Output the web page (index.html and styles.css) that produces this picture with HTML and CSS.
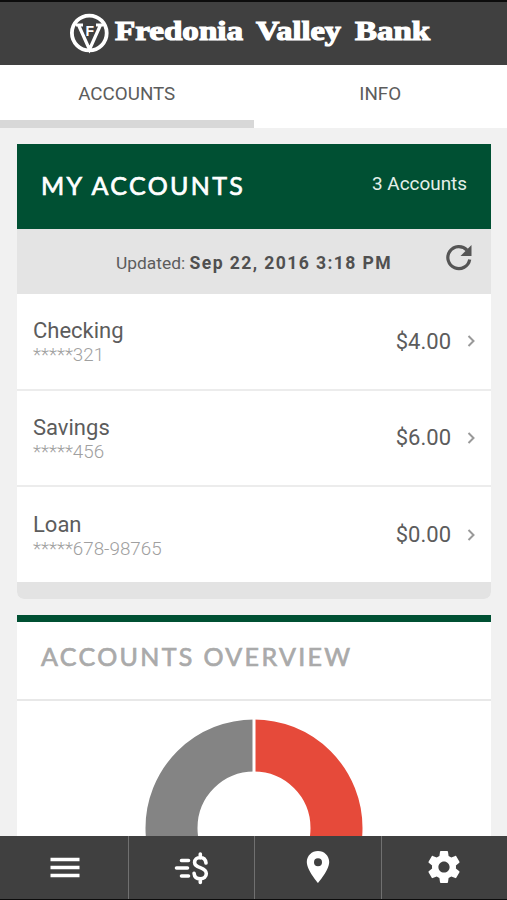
FILE: index.html
```
<!DOCTYPE html>
<html lang="en">

<head>
  <meta charset="UTF-8">
  <meta name="viewport" content="width=device-width, initial-scale=1.0">
  <title>Fredonia Valley Bank</title>
  <link rel="stylesheet" href="styles.css">
</head>

<body>
  <header class="header">
    <svg class="logo" viewBox="0 0 370 50" width="370" height="50">
      <circle cx="20.3" cy="25" r="17.4" fill="none" stroke="#fff" stroke-width="3.8" />
      <path d="M7 17h7M27 17h7M9.500 17l11 24.500 11-24.500" fill="none" stroke="#fff" stroke-width="3.2" />
      <text class="logo-letter" x="16.5" y="28">F</text>
      <text class="logo-text" x="46" y="32" textLength="128" lengthAdjust="spacingAndGlyphs">Fredonia</text>
      <text class="logo-text" x="187" y="32" textLength="85" lengthAdjust="spacingAndGlyphs">Valley</text>
      <text class="logo-text" x="286" y="32" textLength="75" lengthAdjust="spacingAndGlyphs">Bank</text>
    </svg>
  </header>

  <div class="tabs">
    <div class="tab active">ACCOUNTS</div>
    <div class="tab">INFO</div>
  </div>

  <main class="container">
    <section class="card">
      <div class="card-header">
        <h2 class="card-title">MY ACCOUNTS</h2>
        <span class="count">3 Accounts</span>
      </div>
      <div class="updated">
        <span class="updated-text">Updated: <b>Sep 22, 2016 3:18 PM</b></span>
        <svg class="refresh" viewBox="0 0 28 28" width="28" height="28">
          <path d="M24.700 16.500A11 11 0 1 1 22 7.200" fill="none" stroke="#555" stroke-width="3.2" />
          <path d="M26.500 2v11H15.500z" fill="#555" />
        </svg>
      </div>
      <div class="account">
        <div class="account-info">
          <div class="name">Checking</div>
          <div class="number">*****321</div>
        </div>
        <div class="amount">$4.00</div>
        <svg class="arrow" viewBox="0 0 8 12" width="8" height="12"><path d="M1.500 1l5 5-5 5" /></svg>
      </div>
      <div class="account">
        <div class="account-info">
          <div class="name">Savings</div>
          <div class="number">*****456</div>
        </div>
        <div class="amount">$6.00</div>
        <svg class="arrow" viewBox="0 0 8 12" width="8" height="12"><path d="M1.500 1l5 5-5 5" /></svg>
      </div>
      <div class="account">
        <div class="account-info">
          <div class="name">Loan</div>
          <div class="number">*****678-98765</div>
        </div>
        <div class="amount">$0.00</div>
        <svg class="arrow" viewBox="0 0 8 12" width="8" height="12"><path d="M1.500 1l5 5-5 5" /></svg>
      </div>
      <div class="card-footer"></div>
    </section>

    <section class="card overview">
      <div class="overview-header">
        <h2 class="card-title">ACCOUNTS OVERVIEW</h2>
      </div>
      <svg class="chart" viewBox="0 0 218 218" width="218" height="218">
        <path d="M109 26.500a82.500 82.500 0 0 1 0 165" fill="none" stroke="#e64a3a" stroke-width="52" />
        <path d="M109 191.500a82.500 82.500 0 0 1 0-165" fill="none" stroke="#848484" stroke-width="52" />
        <path d="M109 0v218" stroke="#fff" stroke-width="3" />
      </svg>
    </section>
  </main>

  <nav class="bottom-nav">
    <div class="nav-item">
      <svg viewBox="0 0 36 36" width="36" height="36">
        <path d="M3.500 9.500h29M3.500 17.500h29M3.500 25.500h29" stroke="#fff" stroke-width="3.400" />
      </svg>
    </div>
    <div class="nav-item">
      <svg viewBox="0 0 36 36" width="36" height="36">
        <path d="M8.500 10.500h7M3.500 18h11M8.500 26h7" fill="none" stroke="#fff" stroke-width="3.600" stroke-linecap="round" />
        <path d="M33 13c-.4-3.500-2.500-5.500-5.800-5.500s-5.600 1.900-5.600 4.900c0 6.300 11.700 4.300 11.700 11.200 0 3.300-2.500 5.200-5.900 5.200-3.600 0-6-2-6.300-5.500M27.300 4V8M27.300 29V32.500" fill="none" stroke="#fff" stroke-width="3.600" stroke-linecap="round" />
      </svg>
    </div>
    <div class="nav-item">
      <svg viewBox="0 0 36 36" width="36" height="36">
        <path d="M18 1C11.700 1 6.800 5.900 6.800 12c0 8.200 11.200 21 11.200 21s11.200-12.800 11.200-21C29.200 5.900 24.300 1 18 1zm0 15.200a4 4 0 1 1 0-8 4 4 0 0 1 0 8z" fill="#fff" />
      </svg>
    </div>
    <div class="nav-item">
      <svg class="gear" viewBox="2 2 20 20" width="32" height="32">
        <path d="M19.430 12.980c.040-.320.070-.640.070-.980s-.030-.660-.070-.980l2.110-1.650c.190-.150.240-.420.120-.640l-2-3.460c-.120-.220-.390-.300-.610-.220l-2.490 1c-.520-.400-1.080-.730-1.690-.980l-.380-2.650C14.460 2.180 14.250 2 14 2h-4c-.250 0-.460.180-.490.420l-.380 2.650c-.610.250-1.170.590-1.690.980l-2.490-1c-.230-.090-.490 0-.610.220l-2 3.460c-.130.220-.070.490.120.640l2.110 1.650c-.040.320-.070.650-.070.980s.030.660.070.980l-2.110 1.650c-.190.150-.240.420-.120.640l2 3.460c.120.220.390.300.610.220l2.490-1c.520.400 1.080.730 1.690.980l.380 2.650c.030.240.240.420.490.420h4c.250 0 .460-.180.490-.420l.380-2.650c.610-.250 1.170-.590 1.690-.980l2.490 1c.230.090.490 0 .610-.220l2-3.460c.120-.220.070-.490-.120-.640l-2.110-1.650zM12 15.500c-1.930 0-3.500-1.570-3.500-3.500s1.570-3.500 3.500-3.500 3.500 1.570 3.500 3.500-1.570 3.500-3.500 3.500z" fill="#fff" />
      </svg>
    </div>
  </nav>
</body>

</html>
```

FILE: styles.css
```
* {
  box-sizing: border-box;
}

body {
  display: flex;
  flex-direction: column;
  height: 100vh;
  margin: 0;
  overflow: hidden;
  background-color: #f1f1f1;
  color: #5c5c5c;
  font-family: Roboto, sans-serif;
}

.header {
  flex: none;
  height: 65px;
  padding: 6px 0 0 69px;
  background-color: #404040;
  border-top: 2px solid #0c0c0c;
}

.logo {
  display: block;
}

.logo-text {
  font-family: "Liberation Serif", serif;
  font-size: 27px;
  font-weight: bold;
  fill: #fff;
  stroke: #fff;
  stroke-width: 1.2px;
}

.logo-letter {
  font-family: "Liberation Sans", sans-serif;
  font-size: 14px;
  font-weight: bold;
  fill: #fff;
}

.tabs {
  display: flex;
  flex: none;
  height: 63px;
  background-color: #fff;
}

.tab {
  flex: 1;
  border-bottom: 8px solid transparent;
  font-size: 18.8px;
  line-height: 58px;
  text-align: center;
}

.tab.active {
  border-color: #d8d8d8;
}

.container {
  flex: 1;
  min-height: 0;
  padding: 16px 16px 0 17px;
  overflow: hidden;
}

.card {
  margin-bottom: 16px;
  background-color: #fff;
  border-radius: 0 0 7px 7px;
  overflow: hidden;
}

.card-header {
  display: flex;
  align-items: center;
  justify-content: space-between;
  height: 85px;
  padding: 0 24px;
  background-color: #005033;
  color: #fff;
}

.card-title {
  margin: 0;
  padding-bottom: 3px;
  font-family: Lato, sans-serif;
  font-size: 25px;
  font-weight: normal;
  letter-spacing: 2.35px;
  -webkit-text-stroke: 0.7px currentColor;
}

.count {
  padding-bottom: 6px;
  font-size: 18.9px;
  color: #e4f0ea;
}

.updated {
  display: flex;
  align-items: center;
  height: 65px;
  padding: 0 18px 0 99px;
  background-color: #e4e4e4;
  font-size: 17.4px;
}

.updated-text {
  flex: 1;
  padding-top: 2px;
  white-space: nowrap;
}

.updated b {
  color: #505050;
  font-size: 17.6px;
  letter-spacing: 1.4px;
}

.refresh {
  margin-bottom: 9px;
}

.account {
  display: flex;
  align-items: center;
  height: 96.5px;
  padding: 0 16px;
  border-bottom: 2px solid #ececec;
}

.account:nth-last-child(2) {
  height: 95px;
  border-bottom: none;
}

.account-info {
  flex: 1;
  padding-top: 4px;
}

.name {
  font-size: 22px;
  line-height: 25px;
}

.number {
  font-size: 18.8px;
  font-weight: 300;
  line-height: 25px;
  color: #a0a0a0;
}

.amount {
  margin-right: 16px;
  font-size: 22px;
}

.arrow {
  fill: none;
  stroke: #999;
  stroke-width: 2;
}

.card-footer {
  height: 17px;
  background-color: #e3e3e3;
}

.overview {
  border-top: 7px solid #005033;
}

.overview-header {
  height: 79px;
  padding: 19px 24px;
  border-bottom: 2px solid #e8e8e8;
}

.overview .card-title {
  color: #aaa;
}

.chart {
  display: block;
  margin: 18px auto;
}

.bottom-nav {
  display: flex;
  flex: none;
  height: 64px;
  padding-left: 2px;
  background-color: #404040;
  border-bottom: 1px solid #0c0c0c;
}

.nav-item {
  display: flex;
  flex: 1;
  align-items: center;
  justify-content: center;
}

.gear {
  margin-bottom: 1px;
}

.nav-item + .nav-item {
  border-left: 1px solid #707070;
}
```
